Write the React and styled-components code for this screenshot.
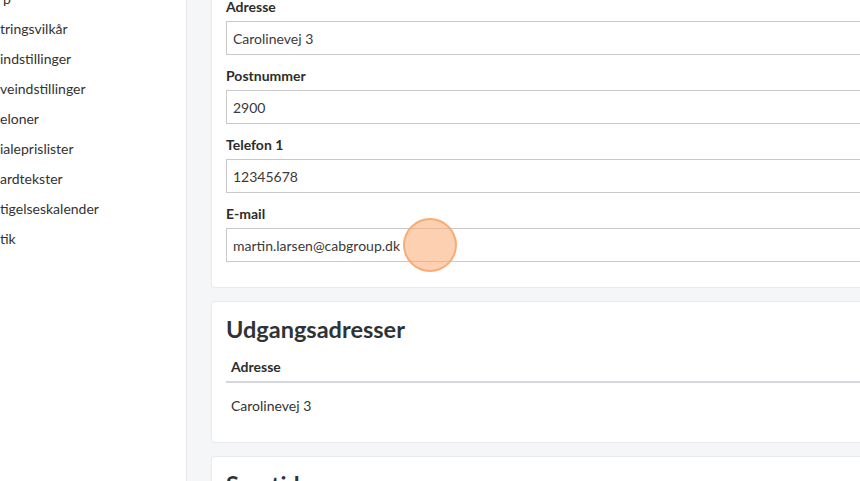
import React from "react";
import styled, { createGlobalStyle } from "styled-components";

const GlobalStyle = createGlobalStyle`
  html, body {
    margin: 0;
    padding: 0;
    height: 100%;
    overflow: hidden;
    background: #f5f6f8;
  }
  body {
    font-family: Lato, "Noto Sans", sans-serif;
    color: #333;
  }
  * { box-sizing: border-box; }
`;

const Layout = styled.div`
  display: flex;
  height: 481px;
  overflow: hidden;
`;

const Sidebar = styled.nav`
  width: 187px;
  flex-shrink: 0;
  background: #fff;
  border-right: 1px solid #e3e5e8;
`;

const MenuList = styled.ul`
  list-style: none;
  margin: -16px 0 0;
  padding: 0;
`;

const MenuItem = styled.li`
  height: 30px;
  line-height: 30px;
  font-size: 14px;
  color: #333;
  white-space: nowrap;
  padding-left: ${({ $indent }) => $indent || 0}px;
`;

const Main = styled.main`
  flex: 1;
  padding: 0 0 0 24px;
  margin-top: -19px;
  display: flex;
  flex-direction: column;
  gap: 13px;
  min-width: 0;
`;

const Card = styled.section`
  background: #fff;
  border: 1px solid #e8eaed;
  border-right: none;
  border-radius: 4px 0 0 4px;
  padding: ${({ $form }) => ($form ? "15px 0 14px 14px" : "12px 0 15px 14px")};
`;

const FormGroup = styled.div`
  margin-bottom: 11px;
`;

const Label = styled.label`
  display: block;
  font-size: 14px;
  font-weight: 700;
  line-height: 20px;
  margin-bottom: 4px;
  color: #2d2d2d;
`;

const Input = styled.div`
  height: 34px;
  border: 1px solid #c9c9c9;
  border-right: none;
  padding: 0 6px;
  display: flex;
  align-items: center;
  font-size: 14px;
  color: #3a3a3a;
  background: #fff;
  position: relative;
`;

const Heading = styled.h2`
  margin: 0 0 7px;
  font-size: 23.5px;
  font-weight: 700;
  line-height: 30px;
  color: #2f3336;
`;

const Table = styled.table`
  width: 100%;
  border-collapse: collapse;
  font-size: 14px;
`;

const Th = styled.th`
  text-align: left;
  font-weight: 700;
  padding: 6px 5px 4px;
  line-height: 20px;
  border-bottom: 2px solid #d4d8dc;
  color: #2d2d2d;
`;

const Td = styled.td`
  padding: 13px 5px 11px;
  line-height: 20px;
  color: #333;
`;

const ClickMarker = styled.span`
  position: absolute;
  left: 176px;
  top: 50%;
  width: 54px;
  height: 54px;
  margin-top: -27px;
  border-radius: 50%;
  background: rgba(252, 170, 115, 0.55);
  border: 2px solid rgba(245, 160, 95, 0.75);
  pointer-events: none;
`;

const menu = [
  { text: "p", indent: 3 },
  { text: "tringsvilkår" },
  { text: "indstillinger" },
  { text: "veindstillinger" },
  { text: "eloner" },
  { text: "ialeprislister" },
  { text: "ardtekster" },
  { text: "tigelseskalender" },
  { text: "tik" },
];

const fields = [
  { label: "Adresse", value: "Carolinevej 3" },
  { label: "Postnummer", value: "2900" },
  { label: "Telefon 1", value: "12345678" },
  { label: "E-mail", value: "martin.larsen@cabgroup.dk", marker: true },
];

export default function App() {
  return (
    <>
      <GlobalStyle />
      <Layout>
        <Sidebar>
          <MenuList>
            {menu.map((m) => (
              <MenuItem key={m.text} $indent={m.indent}>
                {m.text}
              </MenuItem>
            ))}
          </MenuList>
        </Sidebar>
        <Main>
          <Card $form>
            {fields.map((f) => (
              <FormGroup key={f.label}>
                <Label>{f.label}</Label>
                <Input>
                  {f.value}
                  {f.marker && <ClickMarker />}
                </Input>
              </FormGroup>
            ))}
          </Card>
          <Card>
            <Heading>Udgangsadresser</Heading>
            <Table>
              <thead>
                <tr>
                  <Th>Adresse</Th>
                </tr>
              </thead>
              <tbody>
                <tr>
                  <Td>Carolinevej 3</Td>
                </tr>
              </tbody>
            </Table>
          </Card>
          <Card>
            <Heading>Svartider</Heading>
          </Card>
        </Main>
      </Layout>
    </>
  );
}
